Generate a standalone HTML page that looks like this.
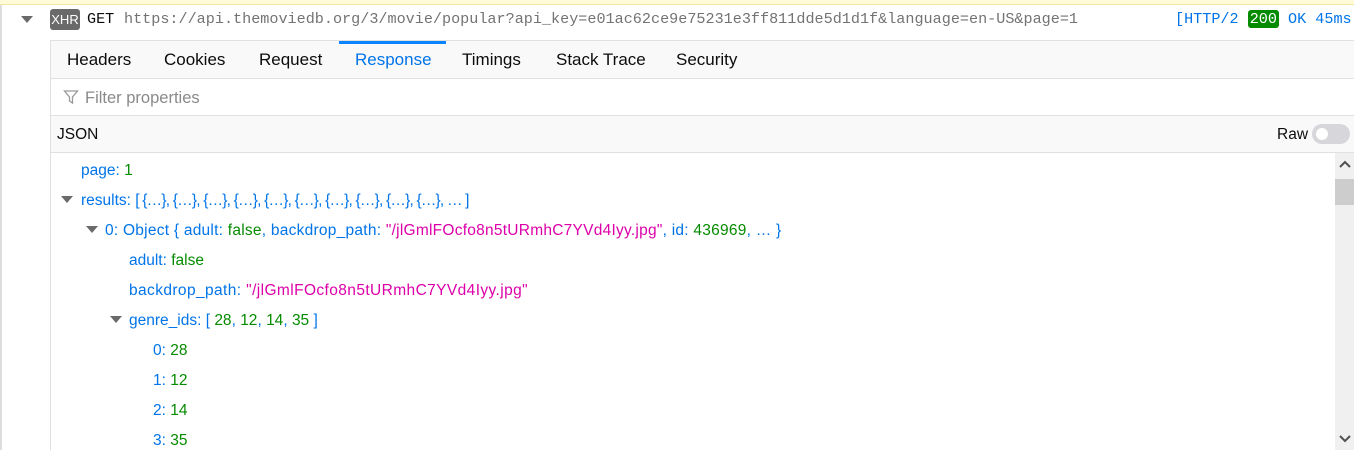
<!DOCTYPE html>
<html><head><meta charset="utf-8"><style>
*{margin:0;padding:0;box-sizing:border-box}
body{width:1354px;height:450px;overflow:hidden;background:#fff;font-family:"Liberation Sans",sans-serif;position:relative}
.abs{position:absolute;white-space:nowrap}
.mono{font-family:"Liberation Mono",monospace;font-size:15.15px}
.b{color:#0074e8}.g{color:#058b00}.m{color:#dd00a9}
.tw{position:absolute;width:0;height:0;border-left:6px solid transparent;border-right:6px solid transparent;border-top:7px solid #6a6a6a}
.row{position:absolute;font-size:15.5px;white-space:nowrap;line-height:20px}
</style></head><body>
<div class="abs" style="left:0;top:0;width:1354px;height:5px;background:#fffbd6;border-bottom:1px solid #f3e6a0"></div>
<div class="abs" style="left:0;top:5px;width:2px;height:445px;background:#ddd"></div>
<div class="tw" style="left:21px;top:16px"></div>
<div class="abs" style="left:50px;top:9px;width:30px;height:21px;background:#6a6a6a;border-radius:3px;color:#fff;font-size:13px;line-height:21px;text-align:center">XHR</div>
<div class="abs mono" style="left:87px;top:10px;color:#0c0c0d">GET</div>
<div class="abs mono" style="left:124px;top:10px;color:#737373">https://api.themoviedb.org/3/movie/popular?api_key=e01ac62ce9e75231e3ff811dde5d1d1f&amp;language=en-US&amp;page=1</div>
<div class="abs mono" style="left:1175px;top:10px;color:#0074e8">[HTTP/2 <span style="background:#058b00;color:#fff;border-radius:3px;padding:0 2px">200</span> OK 45ms</div>
<div class="abs" style="left:50px;top:40px;width:1304px;height:39px;background:#f9f9fa;border-top:1px solid #e0e0e2;border-bottom:1px solid #e0e0e2;border-left:1px solid #e0e0e2"></div>
<div class="abs" style="left:339px;top:41px;width:107px;height:3px;background:#0a84ff"></div>
<div class="abs" style="top:50px;left:0;font-size:17px;color:#0c0c0d">
<span class="abs" style="left:67px">Headers</span><span class="abs" style="left:164px">Cookies</span><span class="abs" style="left:259px">Request</span><span class="abs" style="left:355px;color:#0074e8">Response</span><span class="abs" style="left:462px">Timings</span><span class="abs" style="left:556px">Stack Trace</span><span class="abs" style="left:676px">Security</span></div>
<div class="abs" style="left:50px;top:79px;width:1px;height:371px;background:#e0e0e2"></div>
<svg class="abs" style="left:63px;top:89px" width="16" height="16" viewBox="0 0 16 16"><path d="M1.5 2h13l-5 6v6l-3-2v-4z" fill="none" stroke="#999" stroke-width="1.3"/></svg>
<div class="abs" style="left:85px;top:89px;font-size:16.5px;color:#8a8a8a">Filter properties</div>
<div class="abs" style="left:51px;top:115px;width:1303px;height:38px;background:#f9f9fa;border-top:1px solid #e0e0e2;border-bottom:1px solid #e0e0e2"></div>
<div class="abs" style="left:57px;top:126px;font-size:15.5px;color:#0c0c0d">JSON</div>
<div class="abs" style="left:1277px;top:126px;font-size:15.5px;color:#0c0c0d">Raw</div>
<div class="abs" style="left:1312px;top:124px;width:38px;height:20px;background:#d7d7db;border-radius:10px"></div>
<div class="abs" style="left:1316px;top:128px;width:12px;height:12px;background:#fff;border-radius:6px"></div>
<div class="abs" style="left:1335px;top:153px;width:19px;height:297px;background:#f0f0f0"></div>
<div class="abs" style="left:1335px;top:179px;width:19px;height:26px;background:#cdcdcd"></div>
<svg class="abs" style="left:1339px;top:159px" width="12" height="10"><path d="M1 8l5-5 5 5" fill="none" stroke="#505050" stroke-width="2"/></svg>
<svg class="abs" style="left:1339px;top:434px" width="12" height="10"><path d="M1 2l5 5 5-5" fill="none" stroke="#505050" stroke-width="2"/></svg>
<div class="row" style="left:81px;top:161px"><span class="b">page: </span><span class="g">1</span></div>
<div class="tw" style="left:61px;top:196px"></div>
<div class="row b" style="left:81px;top:191px">results: <span style="letter-spacing:-0.8px">[ {…}, {…}, {…}, {…}, {…}, {…}, {…}, {…}, {…}, {…}, … ]</span></div>
<div class="tw" style="left:86px;top:226px"></div>
<div class="row" style="left:105px;top:221px;letter-spacing:0.25px"><span class="b">0: Object { adult: </span><span class="g">false</span><span class="b">, backdrop_path: </span><span class="m">"/jlGmlFOcfo8n5tURmhC7YVd4Iyy.jpg"</span><span class="b">, id: </span><span class="g">436969</span><span class="b">, … }</span></div>
<div class="row" style="left:129px;top:251px"><span class="b">adult: </span><span class="g">false</span></div>
<div class="row" style="left:129px;top:281px;letter-spacing:0.4px"><span class="b">backdrop_path: </span><span class="m">"/jlGmlFOcfo8n5tURmhC7YVd4Iyy.jpg"</span></div>
<div class="tw" style="left:110px;top:316px"></div>
<div class="row" style="left:129px;top:311px"><span class="b">genre_ids: [ </span><span class="g">28</span><span class="b">, </span><span class="g">12</span><span class="b">, </span><span class="g">14</span><span class="b">, </span><span class="g">35</span><span class="b"> ]</span></div>
<div class="row" style="left:153px;top:341px"><span class="b">0: </span><span class="g">28</span></div>
<div class="row" style="left:153px;top:371px"><span class="b">1: </span><span class="g">12</span></div>
<div class="row" style="left:153px;top:401px"><span class="b">2: </span><span class="g">14</span></div>
<div class="row" style="left:153px;top:431px"><span class="b">3: </span><span class="g">35</span></div>
</body></html>
